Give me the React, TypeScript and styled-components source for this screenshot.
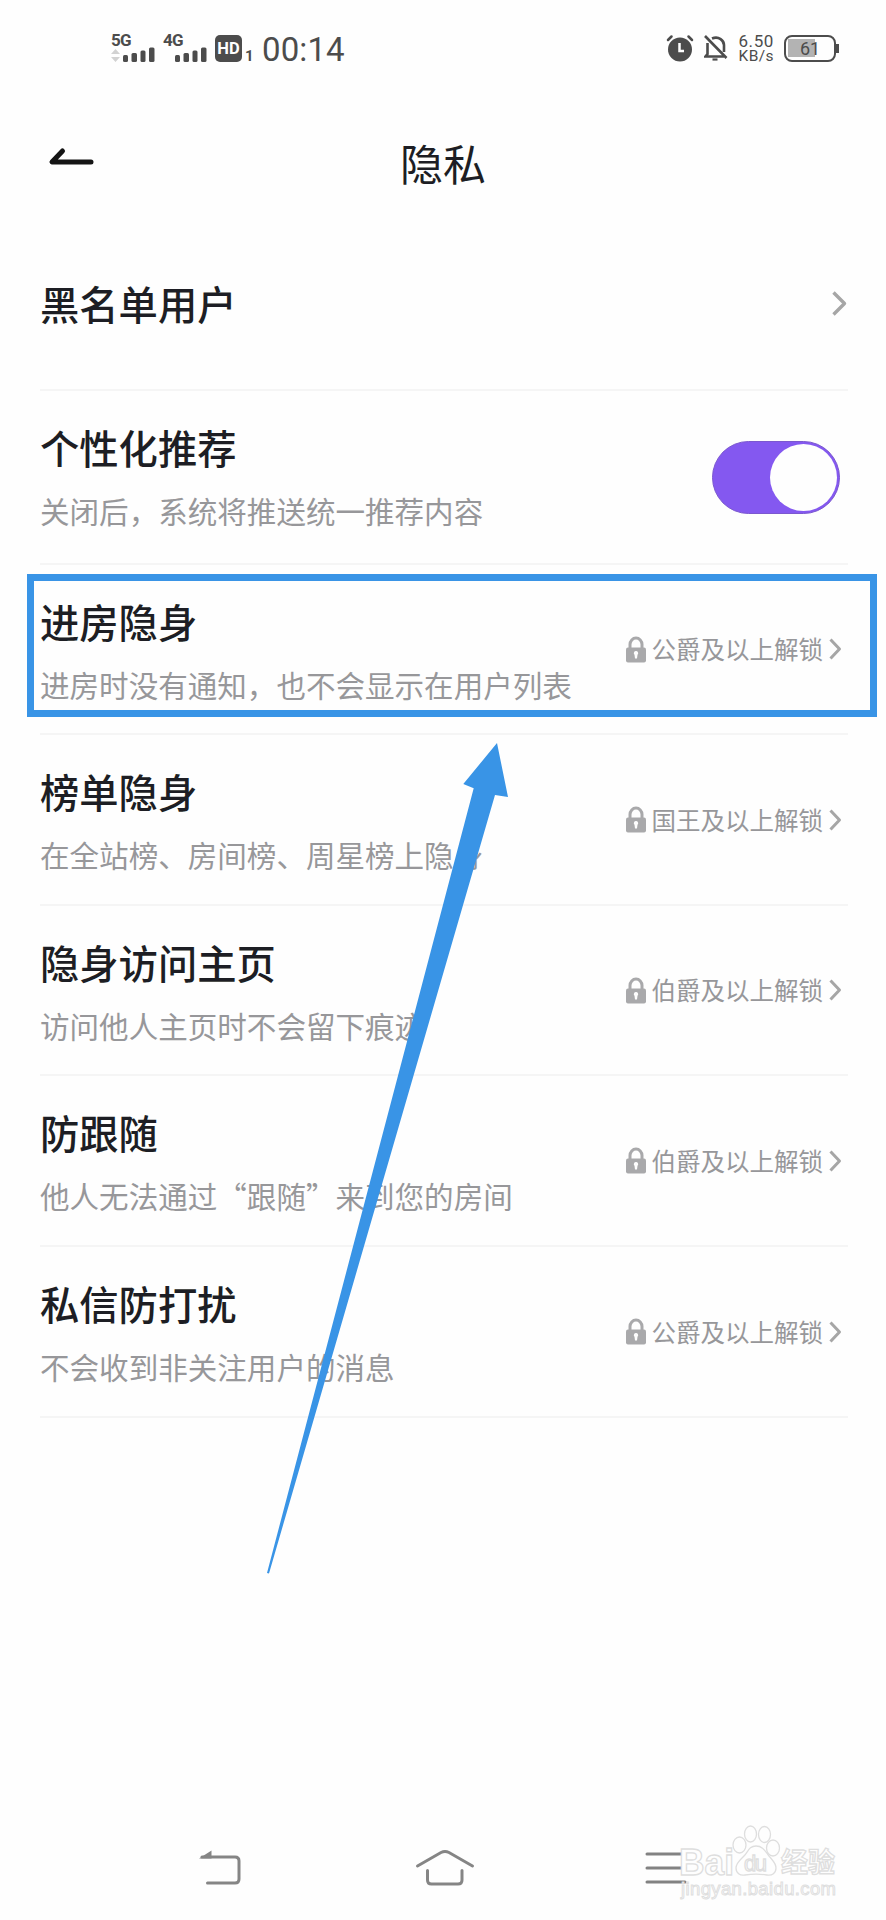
import React from "react";
import styled, { createGlobalStyle } from "styled-components";

const GlobalStyle = createGlobalStyle`
  * { box-sizing: border-box; }
  body { margin: 0; background: #fefefe; }
`;

const Screen = styled.div`
  position: relative;
  display: flex;
  flex-direction: column;
  width: 886px;
  height: 1920px;
  overflow: hidden;
  background: #fefefe;
  font-family: "Noto Sans CJK SC", "Noto Sans", sans-serif;
  svg { display: block; flex: none; }
`;

const StatusBar = styled.header`
  display: flex;
  justify-content: space-between;
  height: 100px;
  padding: 33px 47px 0 111px;
  color: #4c4c4c;
  font-family: Roboto, sans-serif;
`;

const StatusGroup = styled.div`
  display: flex;
  align-items: flex-start;
`;

const StatusIcons = styled.div`
  display: flex;
  gap: 10px;
  padding-top: 1px;
`;

const Signal = styled.div<{ $width: number }>`
  display: flex;
  flex-direction: column;
  width: ${(p) => p.$width}px;
`;

const NetworkLabel = styled.span`
  font-size: 17px;
  font-weight: 700;
  line-height: 14px;
  height: 14px;
  letter-spacing: -0.8px;
`;

const HdBadge = styled.span`
  display: flex;
  align-items: center;
  justify-content: center;
  width: 27px;
  height: 27px;
  margin-top: 2px;
  border-radius: 5px;
  background: #4c4c4c;
  color: #fefefe;
  font-size: 16.5px;
  font-weight: 700;
  line-height: 27px;
`;

const SimIndex = styled.span`
  width: 20px;
  padding: 15px 0 0 3px;
  font-size: 15px;
  font-weight: 700;
  line-height: 17px;
`;

const Clock = styled.time`
  font-size: 33px;
  line-height: 33px;
  font-weight: 400;
  letter-spacing: 0.1px;
`;

const NetSpeed = styled.div`
  width: 38px;
  margin: 1px 10px 0 8px;
  font-size: 17px;
  line-height: 15px;
  text-align: right;
  white-space: nowrap;
  span { display: block; letter-spacing: 0.6px; }
  span + span { font-size: 15.5px; letter-spacing: 0.4px; }
`;

const Battery = styled.div`
  position: relative;
  display: flex;
  align-items: center;
  justify-content: center;
  width: 52px;
  height: 27px;
  margin: 2px 3px 0 0;
  border: 2.5px solid #4c4c4c;
  border-radius: 8px;
  background: linear-gradient(#b3b3b3, #b3b3b3) 2px 2px / 27px 18px no-repeat;
  font-size: 18px;
  font-weight: 400;
  &::after {
    content: "";
    position: absolute;
    right: -5px;
    top: 7px;
    width: 3px;
    height: 9px;
    background: #4c4c4c;
  }
`;

const TitleBar = styled.div`
  display: grid;
  grid-template-columns: 100px 1fr 100px;
  align-items: center;
  height: 128px;
`;

const BackButton = styled.button`
  padding: 0 0 14px 48px;
  border: 0;
  background: none;
`;

const PageTitle = styled.h1`
  margin: 0 0 4px;
  color: #1d1e24;
  font-size: 43px;
  font-weight: 400;
  line-height: 48px;
  text-align: center;
`;

const List = styled.main`
  display: flex;
  flex-direction: column;
  padding: 0 38px 0 40px;
`;

const Row = styled.section<{ $height: number; $end: number }>`
  position: relative;
  display: flex;
  align-items: center;
  justify-content: space-between;
  height: ${(p) => p.$height}px;
  padding-right: ${(p) => p.$end}px;
  border-bottom: 2px solid #f5f5f5;
`;

const LinkRow = styled(Row)`
  padding-bottom: 11px;
`;

const Labels = styled.div`
  display: flex;
  flex-direction: column;
  gap: 29px;
  align-self: flex-start;
  padding-top: 35.5px;
`;

const Label = styled.h2`
  margin: 0;
  color: #1d1e24;
  font-size: 39.3px;
  font-weight: 500;
  line-height: 40px;
  white-space: nowrap;
`;

const Hint = styled.p`
  margin: 0;
  color: #97979a;
  font-size: 29.55px;
  font-weight: 400;
  line-height: 30px;
  white-space: nowrap;
`;

const Unlock = styled.div`
  display: flex;
  align-items: center;
  gap: 6px;
  color: #97979a;
  font-size: 24.5px;
  font-weight: 400;
  line-height: 28px;
  white-space: nowrap;
`;

const Toggle = styled.button`
  display: flex;
  align-items: center;
  justify-content: flex-end;
  width: 128px;
  height: 73px;
  padding: 0 2px;
  border: 1px solid #7b58cf;
  border-radius: 37px;
  background: #8458f0;
`;

const Knob = styled.span`
  width: 67px;
  height: 67px;
  border-radius: 50%;
  background: #fefefe;
`;

const Highlight = styled.div`
  position: absolute;
  left: -13px;
  top: 9px;
  width: 850px;
  height: 143px;
  border: 7px solid #3994e6;
`;

const Pointer = styled.svg`
  position: absolute;
  left: 260px;
  top: 740px;
`;

const NavBar = styled.nav`
  display: flex;
  align-items: center;
  justify-content: space-between;
  height: 76px;
  margin-top: auto;
  padding: 0 199px 28px 198px;
`;

const Watermark = styled.svg`
  position: absolute;
  left: 670px;
  top: 1815px;
`;

const Bars = ({ traffic = false }: { traffic?: boolean }) => (
  <svg width="46" height="17" viewBox="0 0 46 17">
    {traffic && <path d="M0 7 4.500 2 9 7ZM0 10h9l-4.500 5Z" fill="#d2d2d2" />}
    <g fill="#4c4c4c">
      <rect x="12" y="8" width="5" height="7" rx="1.500" />
      <rect x="20.500" y="6" width="5.500" height="9" rx="1.500" />
      <rect x="29.500" y="3.500" width="5" height="11.500" rx="1.500" />
      <rect x="38" y="0.500" width="5.500" height="14.500" rx="1.500" />
    </g>
  </svg>
);

const Alarm = () => (
  <svg width="28" height="28" viewBox="0 0 28 28" fill="none">
    <circle cx="14" cy="15.500" r="12" fill="#4c4c4c" />
    <path d="M2 6 5.500 2.500M22.500 2.500 26 6" stroke="#4c4c4c" strokeWidth="2.500" strokeLinecap="round" />
    <path d="M13.500 9v8H18" stroke="#fefefe" strokeWidth="2.500" />
  </svg>
);

const Muted = () => (
  <svg width="24" height="28" viewBox="0 0 24 28" fill="none" stroke="#4c4c4c" strokeWidth="2.600">
    <path d="M3.500 9v11L1.500 22.500h18.500M8 4.500C15 1.500 20 7 20 11v7M1 2l21.500 22" />
    <path d="M8.500 25.500h5" strokeWidth="2.200" />
  </svg>
);

const Chevron = ({ large = false }: { large?: boolean }) => (
  <svg width={large ? 15 : 13} height={large ? 25 : 22} viewBox={large ? "0 0 15 25" : "0 0 13 22"} fill="none" stroke="#a6a6a6" strokeWidth={large ? 3.4 : 3}>
    <path d={large ? "M1.500 1.500 12.500 12.500 1.500 23.500" : "M1.500 1.500 10.500 11 1.500 20.500"} strokeLinejoin="round" />
  </svg>
);

const Lock = () => (
  <svg width="20" height="27" viewBox="0 0 20 27">
    <path d="M4 13V8.500a6 6.500 0 0 1 12 0V13" fill="none" stroke="#a9a9ab" strokeWidth="3" />
    <rect y="11.500" width="20" height="15" rx="2" fill="#a9a9ab" />
    <path d="M10 15a2.200 2.200 0 0 1 1.500 3.800L11 22.500H9l-.5-3.700A2.200 2.200 0 0 1 10 15Z" fill="#fefefe" />
  </svg>
);

type Item = { title: string; hint: string; rank: string; height: number; marked?: boolean };

const items: Item[] = [
  { title: "进房隐身", hint: "进房时没有通知，也不会显示在用户列表", rank: "公爵及以上解锁", height: 170, marked: true },
  { title: "榜单隐身", hint: "在全站榜、房间榜、周星榜上隐身", rank: "国王及以上解锁", height: 171 },
  { title: "隐身访问主页", hint: "访问他人主页时不会留下痕迹", rank: "伯爵及以上解锁", height: 170 },
  { title: "防跟随", hint: "他人无法通过“跟随”来到您的房间", rank: "伯爵及以上解锁", height: 171 },
  { title: "私信防打扰", hint: "不会收到非关注用户的消息", rank: "公爵及以上解锁", height: 171 },
];

export default function App() {
  return (
    <Screen lang="zh-CN">
      <GlobalStyle />
      <StatusBar>
        <StatusGroup>
          <Signal $width={52}>
            <NetworkLabel>5G</NetworkLabel>
            <Bars traffic />
          </Signal>
          <Signal $width={52}>
            <NetworkLabel>4G</NetworkLabel>
            <Bars />
          </Signal>
          <HdBadge>HD</HdBadge>
          <SimIndex>1</SimIndex>
          <Clock>00:14</Clock>
        </StatusGroup>
        <StatusGroup>
          <StatusIcons>
            <Alarm />
            <Muted />
          </StatusIcons>
          <NetSpeed>
            <span>6.50</span>
            <span>KB/s</span>
          </NetSpeed>
          <Battery>61</Battery>
        </StatusGroup>
      </StatusBar>

      <TitleBar>
        <BackButton aria-label="返回">
          <svg width="48" height="20" viewBox="0 0 48 20" fill="none" stroke="#141414" strokeWidth="5" strokeLinecap="round" strokeLinejoin="round">
            <path d="M14.500 4 4 15H43" />
          </svg>
        </BackButton>
        <PageTitle>隐私</PageTitle>
      </TitleBar>

      <List>
        <LinkRow $height={163} $end={1}>
          <Label>黑名单用户</Label>
          <Chevron large />
        </LinkRow>
        <Row $height={174} $end={8}>
          <Labels>
            <Label>个性化推荐</Label>
            <Hint>关闭后，系统将推送统一推荐内容</Hint>
          </Labels>
          <Toggle role="switch" aria-checked="true" aria-label="个性化推荐">
            <Knob />
          </Toggle>
        </Row>
        {items.map((item) => (
          <Row key={item.title} $height={item.height} $end={6}>
            <Labels>
              <Label>{item.title}</Label>
              <Hint>{item.hint}</Hint>
            </Labels>
            <Unlock>
              <Lock />
              <span>{item.rank}</span>
              <Chevron />
            </Unlock>
            {item.marked && <Highlight />}
          </Row>
        ))}
      </List>

      <NavBar>
        <svg width="46" height="40" viewBox="0 0 46 40" fill="none" stroke="#858585" strokeWidth="3" strokeLinecap="round">
          <path d="M4 9H37q4 0 4 4V31q0 4-4 4H9.500" />
          <path d="M1 10.500 13.500 2.500V10.500Z" fill="#858585" stroke="none" />
        </svg>
        <svg width="60" height="40" viewBox="0 0 60 40" fill="none" stroke="#858585" strokeWidth="3" strokeLinecap="round">
          <path d="M2.500 18 26 4.500q4-2 8 0L57.500 18M12.500 22.500V32q0 4 4 4H43q4 0 4-4V22.500" />
        </svg>
        <svg width="42" height="40" viewBox="0 0 42 40" stroke="#828282" strokeWidth="3" strokeLinecap="round">
          <path d="M2 6H40M2 20H40M2 34H40" />
        </svg>
      </NavBar>

      <Pointer width="260" height="840" viewBox="260 740 260 840" fill="#3994e6">
        <path d="M497 743 508 797 495 795 269 1573.500 267 1573 473.700 788.300 463.300 784Z" />
      </Pointer>

      <Watermark width="180" height="95" viewBox="670 1815 180 95" fill="#fefefe" stroke="#dedede" strokeWidth="1.300" fontFamily="'Liberation Sans', 'Noto Sans CJK SC', sans-serif">
        <text x="679" y="1875" fontSize="36" fontWeight="700" textLength="55" lengthAdjust="spacingAndGlyphs">Bai</text>
        <ellipse cx="739.500" cy="1845" rx="6.500" ry="8" />
        <ellipse cx="750.500" cy="1834" rx="6" ry="8" />
        <ellipse cx="764.500" cy="1834.500" rx="6" ry="8" />
        <ellipse cx="773" cy="1848" rx="6.500" ry="8" />
        <path d="M756 1846c7 0 9 5 13 10s7 7 7 12-4 8-9 7c-7-1-15-1-22 0-5 1-9-2-9-7s4-8 8-12 5-10 12-10Z" />
        <text x="744" y="1871" fontSize="22" textLength="23">du</text>
        <text x="781" y="1872" fontSize="27" fontWeight="700" fontFamily="'Noto Sans CJK SC', sans-serif">经验</text>
        <text x="681" y="1895" fontSize="18.500" strokeWidth="1" textLength="155">jingyan.baidu.com</text>
      </Watermark>
    </Screen>
  );
}
